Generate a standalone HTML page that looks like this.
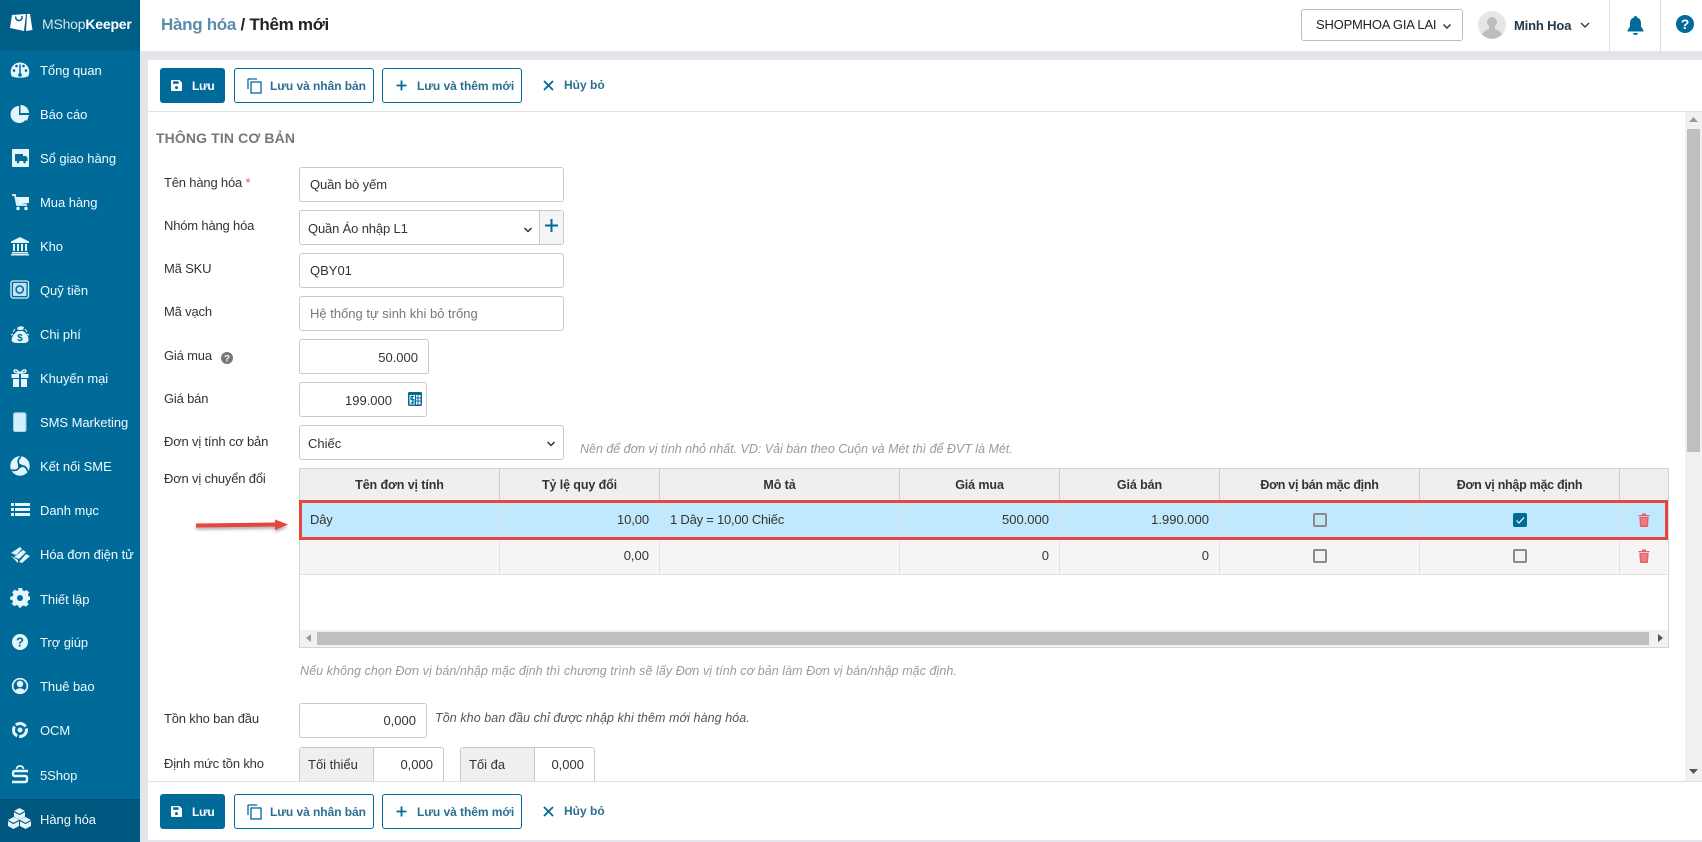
<!DOCTYPE html>
<html lang="vi"><head><meta charset="utf-8"><title>Hàng hóa / Thêm mới</title>
<style>
*{box-sizing:border-box}
html,body{margin:0;padding:0;width:1702px;height:842px;overflow:hidden;background:#e4e5ea;font-family:"Liberation Sans",sans-serif;font-size:13px;color:#333}
.a{position:absolute}
.t{position:absolute;white-space:nowrap;height:20px;line-height:20px}
.r{text-align:right}
.c{text-align:center}
#side{position:absolute;left:0;top:0;width:140px;height:842px;background:#006b99}
#logo{position:absolute;left:0;top:0;width:140px;height:51px;background:#005f87}
#act{position:absolute;left:0;top:799px;width:140px;height:43px;background:#00577f;border-top:1px solid #004f73}
.m{position:absolute;left:40px;color:#f1fbff;font-size:13px;height:20px;line-height:20px;white-space:nowrap;letter-spacing:-.05px}
.ic{position:absolute;left:10px;width:20px;height:20px}
.lb{position:absolute;left:164px;height:20px;line-height:20px;white-space:nowrap;color:#333;font-size:13px;letter-spacing:-.18px}
.in{position:absolute;background:#fff;border:1px solid #c9c9c9;border-radius:3px}
.btn{position:absolute;height:35px;border:1px solid #006b99;border-radius:3px;background:#fff;color:#006b99}
.btn b{position:absolute;top:7px;line-height:20px;font-size:12px;white-space:nowrap;color:#2a6f93;letter-spacing:-.05px}
.h{font-weight:bold;color:#333;font-size:12.5px;letter-spacing:-.1px}
.hint{position:absolute;height:20px;line-height:20px;font-style:italic;color:#9a9a9a;font-size:12.5px;white-space:nowrap}
.vl{position:absolute;width:1px}
.cb{position:absolute;width:14px;height:14px;border:2px solid #8a8a8a;border-radius:2px;background:transparent}
</style></head><body>

<div id="side">
<div id="logo"></div>
<div id="act"></div>
<svg class="a" style="left:10px;top:13px" width="23" height="19" viewBox="0 0 23 19"><path d="M2 2 L16 1 L14 18 L0 15 Z" fill="#fff"/><path d="M17 1 L20 1 L22.500 17 L16 18 Z" fill="#fff"/><path d="M5.500 3.500 Q6 8 9.500 7.500 Q12.500 7 12 3" fill="none" stroke="#005f87" stroke-width="1.500"/></svg>
<div class="t" style="left:42px;top:14px;font-size:14px;color:#cfe3ec;letter-spacing:-.2px">MShop<b style="color:#fff">Keeper</b></div>

<svg class="ic" style="top:60px" viewBox="0 0 20 20"><path d="M2 16.500 A9.300 9.300 0 1 1 18 16.500 Q10 19 2 16.500 Z" fill="#e4f5fc"/><circle cx="4" cy="10.500" r="1.300" fill="#006b99"/><circle cx="6.500" cy="6" r="1.300" fill="#006b99"/><circle cx="16" cy="10.500" r="1.300" fill="#006b99"/><circle cx="13.500" cy="6" r="1.300" fill="#006b99"/><path d="M10 4.500 L10 14" stroke="#006b99" stroke-width="1.500"/><circle cx="10" cy="15" r="1.800" fill="#006b99"/></svg>
<div class="m" style="top:61px">Tổng quan</div>
<svg class="ic" style="top:104px" viewBox="0 0 20 20"><path d="M9 2 A8.500 8.500 0 1 0 17.500 11.500 L9 11 Z" fill="#e4f5fc"/><path d="M10.500 1 A8.500 8.500 0 0 1 19 9 L10.500 9 Z" fill="#e4f5fc"/><path d="M11 11 L19 11 L17 17 Z" fill="#e4f5fc"/></svg>
<div class="m" style="top:105px">Báo cáo</div>
<svg class="ic" style="top:148px;left:12px;width:18px" viewBox="0 0 18 20"><rect x="0" y="1" width="17" height="18" rx="1" fill="#e4f5fc"/><rect x="3" y="6" width="8" height="7" fill="#006b99"/><path d="M11 8h3l1.500 2v3H11z" fill="#006b99"/><circle cx="6" cy="14" r="1.300" fill="#006b99"/><circle cx="12.500" cy="14" r="1.300" fill="#006b99"/></svg>
<div class="m" style="top:149px">Sổ giao hàng</div>
<svg class="ic" style="top:192px" viewBox="0 0 20 20"><path d="M2 3h3l2 10h10" fill="none" stroke="#e4f5fc" stroke-width="1.800"/><path d="M6 5h13v6l-11 1.500z" fill="#e4f5fc"/><circle cx="8" cy="16.500" r="1.700" fill="#e4f5fc"/><circle cx="16" cy="16.500" r="1.700" fill="#e4f5fc"/></svg>
<div class="m" style="top:193px">Mua hàng</div>
<svg class="ic" style="top:236px" viewBox="0 0 20 20"><path d="M10 1 L19 5.500 V7 H1 V5.500 Z" fill="#e4f5fc"/><path d="M3 8h2v7H3zM7 8h2v7H7zM11 8h2v7h-2zM15 8h2v7h-2zM2 16h16v1.500H2zM1 18h18v1.500H1z" fill="#e4f5fc"/></svg>
<div class="m" style="top:237px">Kho</div>
<svg class="ic" style="top:280px" viewBox="0 0 20 20"><rect x="1" y="1" width="17.500" height="17" rx="2" fill="none" stroke="#d8f0fa" stroke-width="1.300"/><rect x="3" y="3" width="13.500" height="13" rx="1" fill="#bfe3f2"/><circle cx="9.700" cy="9.500" r="3.600" fill="none" stroke="#006b99" stroke-width="1.500"/></svg>
<div class="m" style="top:281px">Quỹ tiền</div>
<svg class="ic" style="top:324px" viewBox="0 0 20 20"><path d="M7 4 Q10 1 14 3 L13 6 L8 6 Z" fill="#e4f5fc"/><path d="M7.500 7 H13 Q19 11 18.500 16 Q18 19 14 19 H7 Q2 19 1.500 16 Q2 11 7.500 7 Z" fill="#e4f5fc"/><path d="M3 8l2-3M17 8l-2-3M1 11l2-1M19 11l-2-1" stroke="#e4f5fc" stroke-width="1"/><text x="10" y="17" text-anchor="middle" font-size="10" font-family="Liberation Sans" font-weight="bold" fill="#006b99">$</text></svg>
<div class="m" style="top:325px">Chi phí</div>
<svg class="ic" style="top:368px" viewBox="0 0 20 20"><rect x="1.500" y="6" width="17" height="4" fill="#e4f5fc"/><rect x="3" y="11" width="14" height="8" fill="#e4f5fc"/><path d="M9 6h2v13H9z" fill="#006b99"/><path d="M10 5 Q5 0 4 3 Q4 5 10 5 Q15 0 16 3 Q16 5 10 5" fill="none" stroke="#e4f5fc" stroke-width="1.500"/></svg>
<div class="m" style="top:369px">Khuyến mại</div>
<svg class="ic" style="top:412px" viewBox="0 0 20 20"><rect x="3.500" y="0.700" width="12.500" height="19" rx="2" fill="#d6f0fb" stroke="#8fd0ea" stroke-width="1"/></svg>
<div class="m" style="top:413px">SMS Marketing</div>
<svg class="ic" style="top:456px" viewBox="0 0 20 20"><circle cx="10" cy="10" r="9.700" fill="#e4f5fc"/><g fill="none" stroke="#006b99" stroke-width="1.700"><path d="M10 10 Q6 5 11 .5"/><path d="M10 10 Q6 5 11 .5" transform="rotate(120 10 10)"/><path d="M10 10 Q6 5 11 .5" transform="rotate(240 10 10)"/></g><circle cx="10" cy="10" r="2" fill="#006b99"/></svg>
<div class="m" style="top:457px">Kết nối SME</div>
<svg class="ic" style="top:500px" viewBox="0 0 20 20"><path d="M1 2h3v3H1zM1 7h3v3H1zM1 12h3v3H1zM5 2h15v3H5zM5 7h15v3H5zM5 12h15v3H5z" fill="#e4f5fc" transform="translate(0 1)"/></svg>
<div class="m" style="top:501px">Danh mục</div>
<svg class="ic" style="top:545px" viewBox="0 0 20 20"><path d="M1 8 L10 2 L12 4 L6 10 Z M4 12 L13 5 L16 7 L9 14 Z M9 17 L16 9 L20 11 L12 18 Z M1 11 L8 15 L8 18 Z" fill="#e4f5fc"/></svg>
<div class="m" style="top:545px">Hóa đơn điện tử</div>
<svg class="ic" style="top:588px" viewBox="0 0 20 20"><path fill-rule="evenodd" d="M8 1h4l.6 2.400 1.900.8 2.100-1.300 2.600 2.700-1.300 2.100.8 1.900L20.500 10v3l-2.400.6-.8 1.900 1.300 2.100-2.700 2.600-2.100-1.300-1.900.8L11 21H9l-.6-1.800-1.900-.8-2.100 1.300-2.700-2.600 1.300-2.100-.8-1.900L.2 13v-3l2.400-.6.8-1.900L2.100 5.400l2.700-2.700 2.100 1.300 1.900-.8z" transform="translate(0 -1) scale(1 .98)" fill="#e4f5fc"/><circle cx="10" cy="10" r="3" fill="#006b99"/></svg>
<div class="m" style="top:590px">Thiết lập</div>
<svg class="ic" style="top:632px" viewBox="0 0 20 20"><circle cx="10" cy="10" r="8" fill="#e4f5fc"/><text x="10" y="14.500" text-anchor="middle" font-size="13" font-weight="bold" font-family="Liberation Sans" fill="#006b99">?</text></svg>
<div class="m" style="top:633px">Trợ giúp</div>
<svg class="ic" style="top:676px" viewBox="0 0 20 20"><circle cx="10" cy="10" r="7.300" fill="none" stroke="#e4f5fc" stroke-width="1.700"/><circle cx="10" cy="8" r="3.200" fill="#e4f5fc"/><path d="M4.500 15 Q10 9.500 15.500 15 Q10 19 4.500 15Z" fill="#e4f5fc"/></svg>
<div class="m" style="top:677px">Thuê bao</div>
<svg class="ic" style="top:720px" viewBox="0 0 20 20"><circle cx="10" cy="10" r="6.500" fill="none" stroke="#e4f5fc" stroke-width="3" stroke-dasharray="11 2"/><circle cx="10" cy="10" r="2.500" fill="#e4f5fc"/></svg>
<div class="m" style="top:721px">OCM</div>
<svg class="ic" style="top:764px" viewBox="0 0 20 20"><path d="M18 7H5Q3 7 3 9v1Q3 12 5 12H15Q17 12 17 14v1.500Q17 18 15 18H2" fill="none" stroke="#e4f5fc" stroke-width="2.400"/><path d="M6.500 5Q7 2 10 2t3.500 3" fill="none" stroke="#e4f5fc" stroke-width="1.700"/></svg>
<div class="m" style="top:766px">5Shop</div>
<svg class="a" style="left:8px;top:808px" width="23" height="21" viewBox="0 0 23 21"><path d="M11.500 0l5.500 3v6l-5.500 3-5.500-3V3zM5.500 9l5.500 3v6l-5.500 3L0 18v-6zM17.500 9L23 12v6l-5.500 3L12 18v-6z" fill="#e4f5fc"/><path d="M6 3.500l5.500 3 5.500-3M0 12.500l5.500 3 5.500-3M12 12.500l5.500 3 5.500-3" stroke="#00577f" fill="none"/></svg>
<div class="m" style="top:810px">Hàng hóa</div>
</div>

<!-- header -->
<div class="a" style="left:140px;top:0;width:1562px;height:51px;background:#fff"></div>
<div class="t" style="left:161px;top:15px;font-size:17px;font-weight:bold;color:#222;letter-spacing:-.3px"><span style="color:#5b8cab">Hàng hóa</span> / Thêm mới</div>
<div class="a" style="left:1301px;top:9px;width:162px;height:32px;border:1px solid #bdbdbd;border-radius:3px;background:#fff"></div>
<div class="t" style="left:1316px;top:15px;font-size:13px;color:#222;letter-spacing:-.2px">SHOPMHOA GIA LAI</div>
<svg class="a" style="left:1442px;top:23px" width="10" height="7" viewBox="0 0 10 7"><path d="M1.500 1.500 L5 5 L8.500 1.500" fill="none" stroke="#333" stroke-width="1.400"/></svg>
<svg class="a" style="left:1478px;top:11px" width="28" height="28" viewBox="0 0 28 28"><circle cx="14" cy="14" r="14" fill="#e6e6e6"/><circle cx="14" cy="11" r="5" fill="#bdbdbd"/><path d="M11 15v3q-5 1-7 5.500a14 14 0 0 0 20 0q-2-4.500-7-5.500v-3z" fill="#bdbdbd"/></svg>
<div class="t" style="left:1514px;top:16px;font-size:13px;font-weight:bold;color:#23384a;letter-spacing:-.15px">Minh Hoa</div>
<svg class="a" style="left:1580px;top:22px" width="10" height="7" viewBox="0 0 10 7"><path d="M1 1 L5 5 L9 1" fill="none" stroke="#333" stroke-width="1.300"/></svg>
<div class="vl" style="left:1609px;top:0;height:51px;background:#ddd"></div>
<div class="vl" style="left:1660px;top:0;height:51px;background:#ddd"></div>
<svg class="a" style="left:1627px;top:15px" width="17" height="20" viewBox="0 0 17 20"><path d="M8.500 1a1.500 1.500 0 0 1 1.500 1.500q4 1 4 6v3l2.500 4v1H.5v-1l2.500-4v-3q0-5 4-6A1.500 1.500 0 0 1 8.500 1zM6 18h5a2.500 2 0 0 1-5 0z" fill="#006b99"/></svg>
<svg class="a" style="left:1676px;top:15px" width="18" height="18" viewBox="0 0 18 18"><circle cx="9" cy="9" r="9" fill="#006b99"/><text x="9" y="14" text-anchor="middle" font-size="14" font-weight="bold" font-family="Liberation Sans" fill="#fff">?</text></svg>

<!-- content -->
<div class="a" style="left:148px;top:60px;width:1554px;height:780px;background:#fff"></div>
<div class="a" style="left:148px;top:111px;width:1554px;height:1px;background:#e0e0e0"></div>
<div class="a" style="left:148px;top:781px;width:1554px;height:1px;background:#e0e0e0"></div>

<!-- toolbar top -->
<div class="btn" style="left:160px;top:68px;width:65px;background:#006b99"><b style="left:31px;color:#fff;letter-spacing:-.3px">Lưu</b>
<svg class="a" style="left:10px;top:11px" width="11" height="11" viewBox="0 0 13 13"><path d="M1 0h9l3 3v9a1 1 0 0 1-1 1H1a1 1 0 0 1-1-1V1a1 1 0 0 1 1-1z" fill="#fff"/><rect x="2.500" y="1.500" width="6.500" height="3" fill="#006b99"/><circle cx="6.500" cy="9" r="1.800" fill="#006b99"/></svg></div>
<div class="btn" style="left:234px;top:68px;width:140px"><b style="left:35px">Lưu và nhân bản</b>
<svg class="a" style="left:12px;top:9px" width="15" height="16" viewBox="0 0 15 16"><path d="M1 11V1.500a.5.500 0 0 1 .500-.500H10" fill="none" stroke="#006b99" stroke-width="1.300"/><rect x="4" y="4" width="10" height="11" fill="none" stroke="#006b99" stroke-width="1.300"/></svg></div>
<div class="btn" style="left:382px;top:68px;width:140px"><b style="left:34px">Lưu và thêm mới</b>
<svg class="a" style="left:13px;top:11px" width="11" height="11" viewBox="0 0 11 11"><path d="M5.500 .5v10M.5 5.500h10" stroke="#006b99" stroke-width="1.800"/></svg></div>
<svg class="a" style="left:543px;top:80px" width="11" height="11" viewBox="0 0 11 11"><path d="M1 1l9 9M10 1l-9 9" stroke="#006b99" stroke-width="1.800"/></svg>
<div class="t" style="left:564px;top:75px;font-size:12px;font-weight:bold;color:#2a6f93">Hủy bỏ</div>

<div class="t" style="left:156px;top:128px;font-size:14px;font-weight:bold;color:#777;letter-spacing:.12px">THÔNG TIN CƠ BẢN</div>

<!-- labels -->
<div class="lb" style="top:173px">Tên hàng hóa <span style="color:#f0556a">*</span></div>
<div class="lb" style="top:216px">Nhóm hàng hóa</div>
<div class="lb" style="top:259px">Mã SKU</div>
<div class="lb" style="top:302px">Mã vạch</div>
<div class="lb" style="top:346px">Giá mua</div>
<svg class="a" style="left:221px;top:352px" width="12" height="12" viewBox="0 0 12 12"><circle cx="6" cy="6" r="6" fill="#777"/><text x="6" y="9.500" text-anchor="middle" font-size="9.500" font-weight="bold" font-family="Liberation Sans" fill="#fff">?</text></svg>
<div class="lb" style="top:389px">Giá bán</div>
<div class="lb" style="top:432px">Đơn vị tính cơ bản</div>
<div class="lb" style="top:469px">Đơn vị chuyển đổi</div>
<div class="lb" style="top:709px">Tồn kho ban đầu</div>
<div class="lb" style="top:754px">Định mức tồn kho</div>

<!-- inputs -->
<div class="in" style="left:299px;top:167px;width:265px;height:35px"></div>
<div class="t" style="left:310px;top:175px;letter-spacing:-.1px">Quần bò yếm</div>
<div class="in" style="left:299px;top:210px;width:265px;height:35px"></div>
<div class="a" style="left:539px;top:211px;width:24px;height:33px;background:#f4f4f4;border-left:1px solid #c9c9c9"></div>
<div class="t" style="left:308px;top:219px;letter-spacing:-.15px">Quần Áo nhập L1</div>
<svg class="a" style="left:523px;top:227px" width="10" height="6" viewBox="0 0 10 6"><path d="M1.500 1 L5 4.500 L8.500 1" fill="none" stroke="#333" stroke-width="1.500"/></svg>
<svg class="a" style="left:545px;top:219px" width="13" height="13" viewBox="0 0 13 13"><path d="M6.500 0v13M0 6.500h13" stroke="#006b99" stroke-width="2"/></svg>
<div class="in" style="left:299px;top:253px;width:265px;height:35px"></div>
<div class="t" style="left:310px;top:261px">QBY01</div>
<div class="in" style="left:299px;top:296px;width:265px;height:35px"></div>
<div class="t" style="left:310px;top:304px;color:#777">Hệ thống tự sinh khi bỏ trống</div>
<div class="in" style="left:299px;top:339px;width:130px;height:35px"></div>
<div class="t r" style="left:299px;top:348px;width:119px">50.000</div>
<div class="in" style="left:299px;top:382px;width:128px;height:35px"></div>
<div class="t r" style="left:299px;top:391px;width:93px">199.000</div>
<svg class="a" style="left:408px;top:392px" width="14" height="14" viewBox="0 0 14 14"><rect x="0" y="0" width="14" height="14" rx="1.500" fill="#006b99"/><rect x="1.500" y="3" width="11" height="9.500" fill="#fff"/><path d="M7.500 3v10M10 3v10M7.500 6h6M7.500 9h6" stroke="#006b99" stroke-width="1"/><path d="M6 4.500H3v3h3v3.500H2.500M4.300 3.500v8.500" fill="none" stroke="#006b99" stroke-width="1"/></svg>
<div class="in" style="left:299px;top:425px;width:265px;height:35px"></div>
<div class="t" style="left:308px;top:434px">Chiếc</div>
<svg class="a" style="left:546px;top:441px" width="10" height="6" viewBox="0 0 10 6"><path d="M1.500 1 L5 4.500 L8.500 1" fill="none" stroke="#333" stroke-width="1.500"/></svg>
<div class="hint" style="left:580px;top:439px;letter-spacing:-.02px">Nên để đơn vị tính nhỏ nhất. VD: Vải bán theo Cuộn và Mét thì để ĐVT là Mét.</div>

<!-- table -->
<div class="a" style="left:299px;top:468px;width:1370px;height:180px;border:1px solid #d4d4d4;background:#fff"></div>
<div class="a" style="left:300px;top:469px;width:1368px;height:31px;background:#efefef"></div>
<div class="a" style="left:300px;top:503px;width:1367px;height:34px;background:#c1e9fd"></div>
<div class="a" style="left:300px;top:540px;width:1367px;height:35px;background:#f5f5f5;border-bottom:1px solid #e0e0e0"></div>
<div class="vl" style="left:499px;top:469px;height:31px;background:#ccc"></div><div class="vl" style="left:659px;top:469px;height:31px;background:#ccc"></div><div class="vl" style="left:899px;top:469px;height:31px;background:#ccc"></div><div class="vl" style="left:1059px;top:469px;height:31px;background:#ccc"></div><div class="vl" style="left:1219px;top:469px;height:31px;background:#ccc"></div><div class="vl" style="left:1419px;top:469px;height:31px;background:#ccc"></div><div class="vl" style="left:1619px;top:469px;height:31px;background:#ccc"></div>
<div class="vl" style="left:499px;top:503px;height:72px;background:#d9e6ec"></div><div class="vl" style="left:659px;top:503px;height:72px;background:#d9e6ec"></div><div class="vl" style="left:899px;top:503px;height:72px;background:#d9e6ec"></div><div class="vl" style="left:1059px;top:503px;height:72px;background:#d9e6ec"></div><div class="vl" style="left:1219px;top:503px;height:72px;background:#d9e6ec"></div><div class="vl" style="left:1419px;top:503px;height:72px;background:#d9e6ec"></div><div class="vl" style="left:1619px;top:503px;height:72px;background:#d9e6ec"></div>

<div class="t c h" style="left:300px;top:475px;width:199px">Tên đơn vị tính</div>
<div class="t c h" style="left:500px;top:475px;width:159px">Tỷ lệ quy đổi</div>
<div class="t c h" style="left:660px;top:475px;width:239px">Mô tả</div>
<div class="t c h" style="left:900px;top:475px;width:159px">Giá mua</div>
<div class="t c h" style="left:1060px;top:475px;width:159px">Giá bán</div>
<div class="t c h" style="left:1220px;top:475px;width:199px;letter-spacing:-.28px">Đơn vị bán mặc định</div>
<div class="t c h" style="left:1420px;top:475px;width:199px;letter-spacing:-.28px">Đơn vị nhập mặc định</div>

<div class="t" style="left:310px;top:510px;letter-spacing:-.2px">Dây</div>
<div class="t r" style="left:500px;top:510px;width:149px;letter-spacing:-.1px">10,00</div>
<div class="t" style="left:670px;top:510px;letter-spacing:-.22px">1 Dây = 10,00 Chiếc</div>
<div class="t r" style="left:900px;top:510px;width:149px">500.000</div>
<div class="t r" style="left:1060px;top:510px;width:149px">1.990.000</div>
<div class="t r" style="left:500px;top:546px;width:149px">0,00</div>
<div class="t r" style="left:900px;top:546px;width:149px">0</div>
<div class="t r" style="left:1060px;top:546px;width:149px">0</div>
<div class="cb" style="left:1313px;top:513px"></div>
<div class="cb" style="left:1313px;top:549px"></div>
<div class="cb" style="left:1513px;top:549px"></div>
<div class="a" style="left:1513px;top:513px;width:14px;height:14px;background:#006b99;border-radius:2px"></div>
<svg class="a" style="left:1513px;top:513px" width="14" height="14" viewBox="0 0 14 14"><path d="M3.500 7.500l2.500 2.500 5-5.500" fill="none" stroke="#fff" stroke-width="1.200"/></svg>
<svg class="a" style="left:1638px;top:513px" width="12" height="14" viewBox="0 0 12 14"><path d="M0.500 2h11v1.300h-11zM4 .5h4V2H4zM1.300 4h9.400l-.7 9.500a.7.700 0 0 1-.7.500H2.700a.7.700 0 0 1-.7-.5z" fill="#e5606a"/><path d="M4 5v7.500M6 5v7.500M8 5v7.500" stroke="#f3b0b5" stroke-width=".7"/></svg>
<svg class="a" style="left:1638px;top:549px" width="12" height="14" viewBox="0 0 12 14"><path d="M0.500 2h11v1.300h-11zM4 .5h4V2H4zM1.300 4h9.400l-.7 9.500a.7.700 0 0 1-.7.500H2.700a.7.700 0 0 1-.7-.5z" fill="#e5606a"/><path d="M4 5v7.500M6 5v7.500M8 5v7.500" stroke="#f3b0b5" stroke-width=".7"/></svg>
<!-- red box -->
<div class="a" style="left:299px;top:500px;width:1369px;height:40px;border:3px solid #e8453f"></div>
<!-- h scrollbar -->
<div class="a" style="left:300px;top:630px;width:1368px;height:17px;background:#f1f1f1"></div>
<div class="a" style="left:317px;top:632px;width:1332px;height:13px;background:#bfbfbf"></div>
<svg class="a" style="left:306px;top:634px" width="6" height="8" viewBox="0 0 6 8"><path d="M5 0v8L0 4z" fill="#999"/></svg>
<svg class="a" style="left:1658px;top:634px" width="6" height="8" viewBox="0 0 6 8"><path d="M0 0v8l5-4z" fill="#555"/></svg>

<div class="hint" style="left:300px;top:661px;letter-spacing:.06px">Nếu không chọn Đơn vị bán/nhập mặc định thì chương trình sẽ lấy Đơn vị tính cơ bản làm Đơn vị bán/nhập mặc định.</div>

<div class="in" style="left:299px;top:703px;width:128px;height:35px"></div>
<div class="t r" style="left:299px;top:711px;width:117px">0,000</div>
<div class="hint" style="left:435px;top:708px;color:#555;letter-spacing:.08px">Tồn kho ban đầu chỉ được nhập khi thêm mới hàng hóa.</div>

<div class="in" style="left:299px;top:747px;width:145px;height:34px;border-bottom:0;border-radius:3px 3px 0 0"></div>
<div class="a" style="left:300px;top:748px;width:74px;height:33px;background:#efefef;border-right:1px solid #c9c9c9"></div>
<div class="t" style="left:308px;top:755px">Tối thiểu</div>
<div class="t r" style="left:375px;top:755px;width:58px">0,000</div>
<div class="in" style="left:460px;top:747px;width:135px;height:34px;border-bottom:0;border-radius:3px 3px 0 0"></div>
<div class="a" style="left:461px;top:748px;width:74px;height:33px;background:#efefef;border-right:1px solid #c9c9c9"></div>
<div class="t" style="left:469px;top:755px">Tối đa</div>
<div class="t r" style="left:536px;top:755px;width:48px">0,000</div>

<!-- arrow -->
<svg class="a" style="left:190px;top:512px;filter:drop-shadow(0 2px 1.500px rgba(0,0,0,.35))" width="102" height="26" viewBox="0 0 102 26"><path d="M6 11.500 L85 10.500 L85 7.500 L98 12.500 L85 18 L85 14.500 L6 15.500 Z" fill="#e5473f"/></svg>

<!-- page scrollbar -->
<div class="a" style="left:1685px;top:112px;width:17px;height:669px;background:#f1f1f1"></div>
<div class="a" style="left:1687px;top:129px;width:13px;height:323px;background:#bfbfbf"></div>
<svg class="a" style="left:1689px;top:117px" width="9" height="6" viewBox="0 0 9 6"><path d="M4.500 0L9 5H0z" fill="#9a9a9a"/></svg>
<svg class="a" style="left:1689px;top:769px" width="9" height="6" viewBox="0 0 9 6"><path d="M4.500 5L9 0H0z" fill="#555"/></svg>

<!-- toolbar bottom -->
<div class="btn" style="left:160px;top:794px;width:65px;background:#006b99"><b style="left:31px;color:#fff;letter-spacing:-.3px">Lưu</b>
<svg class="a" style="left:10px;top:11px" width="11" height="11" viewBox="0 0 13 13"><path d="M1 0h9l3 3v9a1 1 0 0 1-1 1H1a1 1 0 0 1-1-1V1a1 1 0 0 1 1-1z" fill="#fff"/><rect x="2.500" y="1.500" width="6.500" height="3" fill="#006b99"/><circle cx="6.500" cy="9" r="1.800" fill="#006b99"/></svg></div>
<div class="btn" style="left:234px;top:794px;width:140px"><b style="left:35px">Lưu và nhân bản</b>
<svg class="a" style="left:12px;top:9px" width="15" height="16" viewBox="0 0 15 16"><path d="M1 11V1.500a.5.500 0 0 1 .500-.500H10" fill="none" stroke="#006b99" stroke-width="1.300"/><rect x="4" y="4" width="10" height="11" fill="none" stroke="#006b99" stroke-width="1.300"/></svg></div>
<div class="btn" style="left:382px;top:794px;width:140px"><b style="left:34px">Lưu và thêm mới</b>
<svg class="a" style="left:13px;top:11px" width="11" height="11" viewBox="0 0 11 11"><path d="M5.500 .5v10M.5 5.500h10" stroke="#006b99" stroke-width="1.800"/></svg></div>
<svg class="a" style="left:543px;top:806px" width="11" height="11" viewBox="0 0 11 11"><path d="M1 1l9 9M10 1l-9 9" stroke="#006b99" stroke-width="1.800"/></svg>
<div class="t" style="left:564px;top:801px;font-size:12px;font-weight:bold;color:#2a6f93">Hủy bỏ</div>

</body></html>
